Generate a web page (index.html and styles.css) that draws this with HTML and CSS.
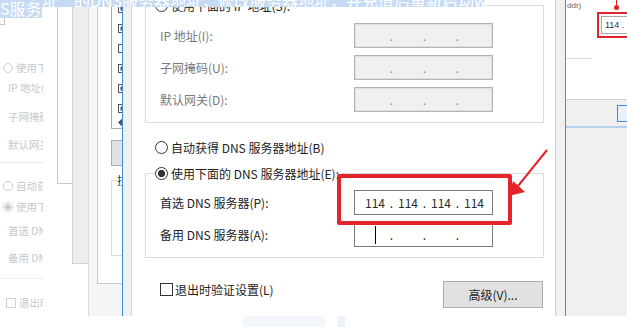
FILE: index.html
```html
<!DOCTYPE html>
<html lang="zh-CN">
<head>
<meta charset="utf-8">
<title>DNS</title>
<link rel="stylesheet" href="styles.css">
</head>
<body>
<div class="shot">

  <div class="ghost">
    <div class="ghost-corner"></div>
    <div class="g-row g1"><span class="g-radio"></span>使用下面的</div>
    <div class="g-row g2 indent">IP 地址(I):</div>
    <div class="g-row g3 indent">子网掩码(U):</div>
    <div class="g-row g4 indent">默认网关(D):</div>
    <div class="g-line g5"></div>
    <div class="g-row g6"><span class="g-radio"></span>自动获得 DNS</div>
    <div class="g-row g7"><span class="g-radio on"></span>使用下面的 DNS</div>
    <div class="g-row g8 indent">首选 DNS 服务器</div>
    <div class="g-row g9 indent">备用 DNS 服务器</div>
    <div class="g-line g10"></div>
    <div class="g-row g11"><span class="g-check"></span>退出时验证</div>
  </div>

  <div class="win w1"></div>
  <div class="win w2"></div>
  <div class="win w3"></div>
  <div class="win w4">
    <div class="list">
      <div class="li"><span class="cb"></span></div>
      <div class="li"><span class="cb"></span></div>
      <div class="li"><span class="cb off"></span></div>
      <div class="li"><span class="cb"></span></div>
      <div class="li"><span class="cb"></span></div>
      <div class="li"><span class="cb"></span></div>
      <div class="li short"><span class="diamond"></span></div>
    </div>
    <div class="mini-btn"></div>
    <div class="mini-group"><span class="mini-cap">拉</span></div>
  </div>

  <div class="dialog">
    <div class="d-left"></div>
    <div class="d-main">
      <div class="group g-ip">
        <div class="caption"><span class="radio"></span><span>使用下面的 IP 地址(S):</span></div>
        <div class="rows">
          <div class="row disabled">
            <span>IP 地址(I):</span>
            <div class="ip off"><span class="f"></span><span class="dot">.</span><span class="f"></span><span class="dot">.</span><span class="f"></span><span class="dot">.</span><span class="f"></span></div>
          </div>
          <div class="row disabled">
            <span>子网掩码(U):</span>
            <div class="ip off"><span class="f"></span><span class="dot">.</span><span class="f"></span><span class="dot">.</span><span class="f"></span><span class="dot">.</span><span class="f"></span></div>
          </div>
          <div class="row disabled">
            <span>默认网关(D):</span>
            <div class="ip off"><span class="f"></span><span class="dot">.</span><span class="f"></span><span class="dot">.</span><span class="f"></span><span class="dot">.</span><span class="f"></span></div>
          </div>
        </div>
      </div>

      <div class="radio-row"><span class="radio"></span><span>自动获得 DNS 服务器地址(B)</span></div>

      <div class="group g-dns">
        <div class="caption"><span class="radio on"></span><span>使用下面的 DNS 服务器地址(E):</span></div>
        <div class="rows">
          <div class="row">
            <span>首选 DNS 服务器(P):</span>
            <div class="ip"><span class="f">114</span><span class="dot">.</span><span class="f">114</span><span class="dot">.</span><span class="f">114</span><span class="dot">.</span><span class="f">114</span></div>
          </div>
          <div class="row">
            <span>备用 DNS 服务器(A):</span>
            <div class="ip"><span class="f"><span class="caret"></span></span><span class="dot">.</span><span class="f"></span><span class="dot">.</span><span class="f"></span><span class="dot">.</span><span class="f"></span></div>
          </div>
        </div>
      </div>

      <div class="foot">
        <div class="check"><span class="box"></span><span>退出时验证设置(L)</span></div>
        <button class="btn" type="button">高级(V)...</button>
      </div>
    </div>
    <div class="d-right"></div>
  </div>

  <div class="rwin">
    <div class="rw-top">
      <div class="rw-label">ddr)</div>
      <div class="rw-line"></div>
    </div>
    <div class="rw-bar"><span class="rw-btn"></span></div>
    <div class="rw-rest"></div>
  </div>

  <div class="band band-a"><span class="band-text">址”的DNS服务器地址，修改服务器地址，并充值后重新启动wegame出问题解决</span></div>
  <div class="band band-b"><span class="band-text">S服务器地址</span></div>

  <div class="redbox"></div>
  <svg class="arrow" width="60" height="65" viewBox="0 0 60 65">
    <line x1="47" y1="10" x2="18" y2="46" stroke="#e3242b" stroke-width="2"/>
    <polygon points="9,56 13,41 25,52" fill="#e3242b"/>
  </svg>

  <div class="rpin"></div>
  <div class="rbox2"><div class="rb-input">114 . 1</div></div>

  <div class="bstrip s1"></div>
  <div class="bstrip s2"></div>
</div>
</body>
</html>
```

FILE: styles.css
```css
* { box-sizing: border-box; }
html, body { margin: 0; padding: 0; }
body {
  width: 627px; height: 327px; overflow: hidden; background: #fff;
  font-family: "Noto Sans CJK SC", "Noto Sans", sans-serif;
  font-size: 12px; line-height: 17px; color: #222;
}
.shot { position: relative; width: 627px; height: 327px; overflow: hidden; background: #fff; }

/* faded copy on the left */
.ghost {
  position: absolute; left: 0; top: 0; width: 43px; height: 316px; overflow: hidden;
  color: #c8c8c8; font-size: 10.5px; line-height: 14px; white-space: nowrap;
}
.ghost-corner { width: 5px; height: 25px; border-right: 1px solid #c4c4c4; border-bottom: 1px solid #c4c4c4; background: #fafafa; }
.g-row { display: flex; align-items: center; height: 14px; gap: 3px; padding-left: 3px; }
.g-row.indent { padding-left: 8px; }
.g-radio { width: 10px; height: 10px; border: 1px solid #cfcfcf; border-radius: 50%; flex: none; }
.g-radio.on { background: radial-gradient(circle, #c6c6c6 0 2.5px, #fff 3px); }
.g-check { width: 10px; height: 10px; border: 1px solid #d0d0d0; flex: none; }
.g-line { height: 1px; background: #ededed; }
.g1 { margin-top: 36px; }
.g2 { margin-top: 6px; }
.g3 { margin-top: 15px; }
.g4 { margin-top: 14px; }
.g5 { margin-top: 10px; }
.g6 { margin-top: 16px; }
.g7 { margin-top: 7px; }
.g8 { margin-top: 10px; }
.g9 { margin-top: 13px; }
.g10 { margin-top: 13px; }
.g11 { margin-top: 17px; padding-left: 6px; }

/* background windows */
.win { position: absolute; top: 0; }
.w1 { left: 57px; width: 30px; height: 184px; border-left: 1px solid #c9c9c9; border-bottom: 1px solid #c9c9c9; background: #fff; }
.w2 { left: 72px; width: 40px; height: 264px; border-left: 1px solid #d2d2d2; border-bottom: 1px solid #d2d2d2; background: #ededed; }
.w3 { left: 88px; width: 40px; height: 316px; border-left: 1px solid #dadada; background: #f5f5f5; }
.w4 { left: 97px; width: 30px; height: 284px; border-left: 1px solid #cbcbcb; border-bottom: 1px solid #cbcbcb; background: #fff; padding-left: 13px; }
.list { width: 20px; height: 131px; border: 1px solid #ababab; border-top: 0; padding-left: 6px; }
.li { height: 20px; display: flex; align-items: center; }
.li:first-child { margin-top: -2px; }
.li.short { height: 8px; margin-top: 0; }
.cb { width: 8px; height: 9px; border: 1px solid #555; background: #555; box-shadow: inset 0 0 0 1.5px #fff; flex: none; }
.cb.off { background: #fff; }
.diamond { width: 5px; height: 5px; background: #555; transform: rotate(45deg); margin-left: 1px; }
.mini-btn { width: 20px; height: 26px; margin-top: 11px; background: #e1e1e1; border: 1px solid #adadad; }
.mini-group { width: 20px; height: 76px; margin-top: 14px; border: 1px solid #dcdcdc; padding-left: 5px; }
.mini-cap { display: block; margin-top: -9px; width: max-content; background: #fff; font-size: 11px; line-height: 16px; color: #333; }

/* main dialog */
.dialog {
  position: absolute; left: 122px; top: 0; width: 444px; height: 316px;
  display: flex; border-left: 1px solid #3d8fe0; border-right: 1px solid #3d8fe0; background: #fff;
}
.d-left { width: 9px; flex: none; background: #f0f0f0; border-right: 1px solid #d6d6d6; }
.d-right { width: 10px; flex: none; background: #f0f0f0; border-left: 1px solid #cfcfcf; }
.d-main { flex: 1; background: #fff; display: flex; flex-direction: column; }

.group { width: 399px; margin-left: 13px; border: 1px solid #dcdcdc; padding: 0 50px 10px 14px; }
.g-ip { margin-top: 5px; }
.g-dns { margin-top: 17px; }
.caption {
  display: flex; align-items: center; gap: 3px; height: 17px;
  margin: -9px 0 0 -5px; width: max-content; background: #fff; padding-right: 2px; color: #222;
}
.g-ip .rows { padding-top: 9px; }
.g-dns .rows { padding-top: 8px; }
.row { display: flex; justify-content: space-between; align-items: center; height: 25px; }
.row + .row { margin-top: 7px; }
.row.disabled { color: #7a7a7a; }

.radio { width: 13px; height: 13px; border: 1px solid #333; border-radius: 50%; background: #fff; flex: none; }
.radio.on { background: radial-gradient(circle, #333 0 3.3px, #fff 3.9px); }
.radio-row { display: flex; align-items: center; gap: 3px; height: 17px; margin: 16px 0 0 23px; color: #222; }

.ip {
  width: 139px; height: 25px; border: 1px solid #7a7a7a; background: #fff;
  display: flex; align-items: center; padding-left: 5px; color: #2a2a2a;
}
.ip.off { background: #f0f0f0; border-color: #b3b3b3; box-shadow: inset 0 0 0 1px #dedede; color: #8a8a8a; }
.f { width: 30px; display: flex; justify-content: center; align-items: center; height: 17px; }
.dot { width: 3px; display: flex; justify-content: center; }
.caret { width: 1px; height: 18px; background: #000; }

.foot { display: flex; justify-content: space-between; align-items: flex-start; margin: 23px 12px 0 28px; }
.check { display: flex; align-items: center; gap: 2px; height: 17px; color: #222; }
.box { width: 13px; height: 13px; border: 1px solid #333; background: #fff; }
.btn {
  width: 100px; height: 27px; padding: 0; border: 1px solid #adadad; background: #e1e1e1;
  font-family: inherit; font-size: 12px; line-height: 17px; color: #222;
}

/* right side window */
.rwin { position: absolute; left: 566px; top: 0; width: 61px; height: 316px; background: #f0f0f0; display: flex; flex-direction: column; }
.rw-top { height: 100px; background: #fff; border-bottom: 1px solid #d0d0d0; padding-top: 1px; }
.rw-label { font-family: "Liberation Sans", sans-serif; font-size: 8px; line-height: 9px; color: #666; padding-left: 1px; }
.rw-line { width: 25px; height: 1px; background: #dcdcdc; margin-top: 48px; }
.rw-bar { height: 28px; display: flex; justify-content: flex-end; align-items: center; border-bottom: 2px solid #b6d1f0; }
.rw-btn { width: 12px; height: 17px; border: 1px solid #3b8ee2; background: #e8f1fb; margin-right: -2px; }
.rw-rest { flex: 1; background: #f0f0f0; }

/* highlighted text bands at the top */
.band { position: absolute; left: 0; top: 0; overflow: hidden; background: #c6daf4; }
.band-a { width: 485px; height: 7px; }
.band-b { width: 42px; height: 18px; }
.band-text { position: absolute; left: 0; white-space: nowrap; color: #fff; font-size: 16px; line-height: 18px; }
.band-a .band-text { top: -9px; left: 42px; }
.band-b .band-text { top: -1px; }

/* annotations */
.redbox { position: absolute; left: 337px; top: 174px; width: 175px; height: 51px; border: 4px solid #e3242b; border-radius: 2px; }
.arrow { position: absolute; left: 500px; top: 140px; }
.rpin { position: absolute; left: 614px; top: 0; width: 5px; height: 11px; background: linear-gradient(#e3242b, #e3242b) center top / 1px 6px no-repeat; }
.rpin::after { content: ""; position: absolute; left: 0; top: 5px; width: 5px; height: 5px; border-radius: 50%; background: #e3242b; }
.rbox2 { position: absolute; left: 597px; top: 12px; width: 40px; height: 26px; border: 2px solid #e3242b; padding: 2px; }
.rb-input { height: 18px; border: 1px solid #a9a9a9; background: #fff; font-family: "Liberation Sans", sans-serif; font-size: 9px; line-height: 16px; color: #333; padding-left: 3px; white-space: nowrap; overflow: hidden; }

.bstrip { position: absolute; top: 316px; height: 11px; }
.s1 { left: 243px; width: 82px; background: #f3f6fb; }
.s2 { left: 337px; width: 8px; background: #ecf2fb; }
```
